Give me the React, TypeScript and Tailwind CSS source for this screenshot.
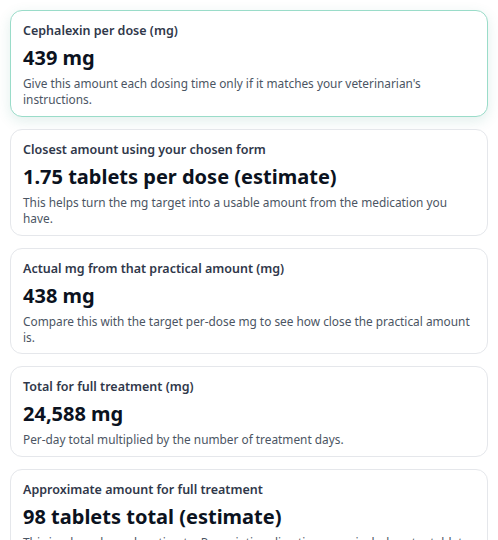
const cards = [
  {
    title: "Cephalexin per dose (mg)",
    value: "439 mg",
    note: "Give this amount each dosing time only if it matches your veterinarian's instructions.",
    highlight: true,
  },
  {
    title: "Closest amount using your chosen form",
    value: "1.75 tablets per dose (estimate)",
    note: "This helps turn the mg target into a usable amount from the medication you have.",
  },
  {
    title: "Actual mg from that practical amount (mg)",
    value: "438 mg",
    note: "Compare this with the target per-dose mg to see how close the practical amount is.",
  },
  {
    title: "Total for full treatment (mg)",
    value: "24,588 mg",
    note: "Per-day total multiplied by the number of treatment days.",
  },
  {
    title: "Approximate amount for full treatment",
    value: "98 tablets total (estimate)",
    note: "This is a broad supply estimate. Prescription directions may include extra tablets or partially used doses.",
  },
];

export default function App() {
  return (
    <div className="bg-white px-[10px] py-[10px] flex flex-col gap-3 font-['Noto_Sans',sans-serif]">
      {cards.map((c) => (
        <div
          key={c.title}
          className={`rounded-xl border bg-white px-3 pt-[11px] pb-[8px] ${
            c.highlight
              ? "border-[#9adcc9] shadow-[0_4px_14px_rgba(16,120,100,0.12)]"
              : "border-[#e5e7eb]"
          }`}
        >
          <div className="text-[12.5px] font-semibold leading-[18px] text-[#30384a]">{c.title}</div>
          <div className="mt-[5px] text-[20px] font-bold leading-[26px] text-[#0b1220]">{c.value}</div>
          <p className="mt-[4px] text-[11.85px] leading-[16.4px] text-[#4b5563]">{c.note}</p>
        </div>
      ))}
    </div>
  );
}
